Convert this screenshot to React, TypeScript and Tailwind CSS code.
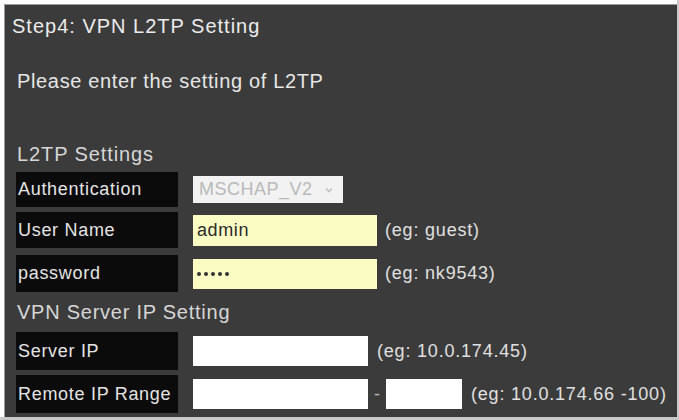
import { ReactNode } from "react";

function Label({ children }: { children: ReactNode }) {
  return (
    <div className="flex h-full w-[162px] items-center bg-[#0b0b0b] pl-[2px] text-[18px] tracking-[0.7px] text-[#e4e4e4]">
      {children}
    </div>
  );
}

function Row({ children, h }: { children: ReactNode; h: string }) {
  return <div className={`flex items-center ${h}`}>{children}</div>;
}

function Hint({ children, ml }: { children: ReactNode; ml: string }) {
  return <span className={`${ml} text-[18px] tracking-[0.8px] text-[#e0e0e0]`}>{children}</span>;
}

export default function App() {
  return (
    <div className="h-[420px] w-[679px] bg-[#c9c9c9] font-['Liberation_Sans',Arial,sans-serif]">
      <div className="h-[417px] w-[677px] bg-white pl-[4px] pt-[4px]">
        <div className="h-[413px] w-[673px] border-l border-t border-[#9a9a9a] bg-[#3b3b3b]">
          <div className="pl-[7px] pt-[9px] text-[20px] leading-[24px] tracking-[1px] text-[#ececec]">
            Step4: VPN L2TP Setting
          </div>
          <div className="pl-[12px] pt-[31px] text-[20px] leading-[24px] tracking-[0.65px] text-[#e6e6e6]">
            Please enter the setting of L2TP
          </div>
          <div className="pl-[12px] pt-[49px] text-[20px] leading-[24px] tracking-[0.9px] text-[#d6d6d6]">
            L2TP Settings
          </div>

          <div className="flex flex-col pl-[11px] pt-[6px]">
            <Row h="h-[35px]">
              <Label>Authentication</Label>
              <div className="ml-[15px] flex h-[27px] w-[150px] items-center justify-between bg-[#f2f2f2] pl-[6px] text-[18px] tracking-[0.5px] text-[#b9b9b9]">
                <span>MSCHAP_V2</span>
                <svg width="10" height="10" viewBox="0 0 10 10" className="mr-[9px]">
                  <path d="M2 3.5 L5 6.5 L8 3.5" fill="none" stroke="#c2c2c2" strokeWidth="1.6" />
                </svg>
              </div>
            </Row>
            <Row h="mt-[5px] h-[36px]">
              <Label>User Name</Label>
              <div className="ml-[15px] flex h-[31px] w-[184px] items-center bg-[#fbfbc4] pl-[4px] text-[18px] tracking-[0.6px] text-[#2a2a2a]">
                admin
              </div>
              <Hint ml="ml-[8px]">(eg: guest)</Hint>
            </Row>
            <Row h="mt-[7px] h-[37px]">
              <Label>password</Label>
              <div className="ml-[15px] flex h-[30px] w-[184px] items-center gap-[3px] bg-[#fbfbc4] pl-[4px]">
                <span className="h-[4px] w-[4px] rounded-full bg-[#333]" />
                <span className="h-[4px] w-[4px] rounded-full bg-[#333]" />
                <span className="h-[4px] w-[4px] rounded-full bg-[#333]" />
                <span className="h-[4px] w-[4px] rounded-full bg-[#333]" />
                <span className="h-[4px] w-[4px] rounded-full bg-[#333]" />
              </div>
              <Hint ml="ml-[8px]">(eg: nk9543)</Hint>
            </Row>
          </div>

          <div className="pl-[12px] pt-[8px] text-[20px] leading-[24px] tracking-[0.75px] text-[#d6d6d6]">
            VPN Server IP Setting
          </div>

          <div className="flex flex-col pl-[11px] pt-[8px]">
            <Row h="h-[38px]">
              <Label>Server IP</Label>
              <div className="ml-[15px] h-[30px] w-[175px] bg-white" />
              <Hint ml="ml-[9px]">(eg: 10.0.174.45)</Hint>
            </Row>
            <Row h="mt-[5px] h-[38px]">
              <Label>Remote IP Range</Label>
              <div className="ml-[15px] h-[30px] w-[175px] bg-white" />
              <span className="mx-[6px] text-[18px] text-[#b5b5b5]">-</span>
              <div className="h-[30px] w-[76px] bg-white" />
              <Hint ml="ml-[9px]">(eg: 10.0.174.66 -100)</Hint>
            </Row>
          </div>
        </div>
      </div>
    </div>
  );
}
